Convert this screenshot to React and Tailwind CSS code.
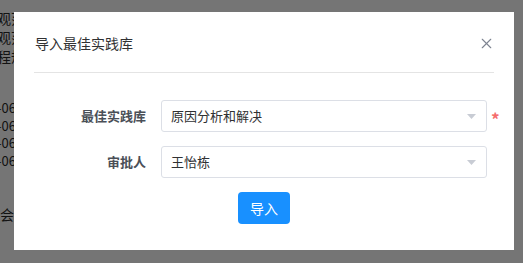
import { X } from 'lucide-react'

const cjk = { fontFamily: '"Noto Sans CJK SC", "Liberation Sans", sans-serif' }

function Caret() {
  return (
    <svg width="9" height="5" viewBox="0 0 9 5" className="shrink-0">
      <path d="M0 0 H9 L4.5 5 Z" fill="#c8ccd4" />
    </svg>
  )
}

function SelectRow({ label, value, required }) {
  return (
    <div className="flex items-center">
      <div className="w-[112px] shrink-0 text-right text-[13px] font-semibold text-[#4a4f57]">{label}</div>
      <div className="ml-[15px] flex h-[32px] w-[326px] shrink-0 items-center justify-between rounded-[3px] border border-[#dcdfe6] bg-white pl-[9px] pr-[10px]">
        <span className="text-[13px] text-[#303133]">{value}</span>
        <Caret />
      </div>
      <div className="ml-[4px] mt-[5px] w-[9px] shrink-0 text-[17px] font-bold leading-none text-[#f56c6c]">{required ? '*' : ''}</div>
    </div>
  )
}

export default function App() {
  return (
    <div className="relative h-[263px] w-[523px] overflow-hidden bg-white" style={cjk}>
      {/* page underneath */}
      <div className="ml-[-3px] flex flex-col text-[14px] leading-[19px] text-[#2b2b2b]">
        <div className="pt-[9px]">观范</div>
        <div>观范</div>
        <div>程规</div>
        <div className="mt-[33px] flex flex-col text-[13px] leading-[17.5px]">
          <span>-06</span>
          <span>-06</span>
          <span>-06</span>
          <span>-06</span>
        </div>
        <div className="mt-[36px] ml-[3px]">会议</div>
      </div>

      {/* overlay */}
      <div className="absolute inset-0 bg-black/[0.54]" />

      {/* dialog */}
      <div className="absolute left-[14px] top-[12px] w-[500px] bg-white">
        <div className="flex items-center justify-between px-5 pt-[21px] pb-[19px]">
          <span className="pl-[1px] text-[14px] leading-[20px] text-[#303133]">导入最佳实践库</span>
          <X size={17} strokeWidth={1.6} className="mr-[-1px] text-[#7d8491]" />
        </div>
        <div className="mx-5 h-px bg-[#e4e4e4]" />

        <div className="flex flex-col gap-[14px] px-5 pt-[27px]">
          <SelectRow label="最佳实践库" value="原因分析和解决" required />
          <SelectRow label="审批人" value="王怡栋" />
        </div>

        <div className="flex justify-center pt-[14px] pb-[26px]">
          <button className="h-[32px] w-[52px] rounded-[4px] bg-[#1890ff] text-[14px] text-white">导入</button>
        </div>
      </div>
    </div>
  )
}
